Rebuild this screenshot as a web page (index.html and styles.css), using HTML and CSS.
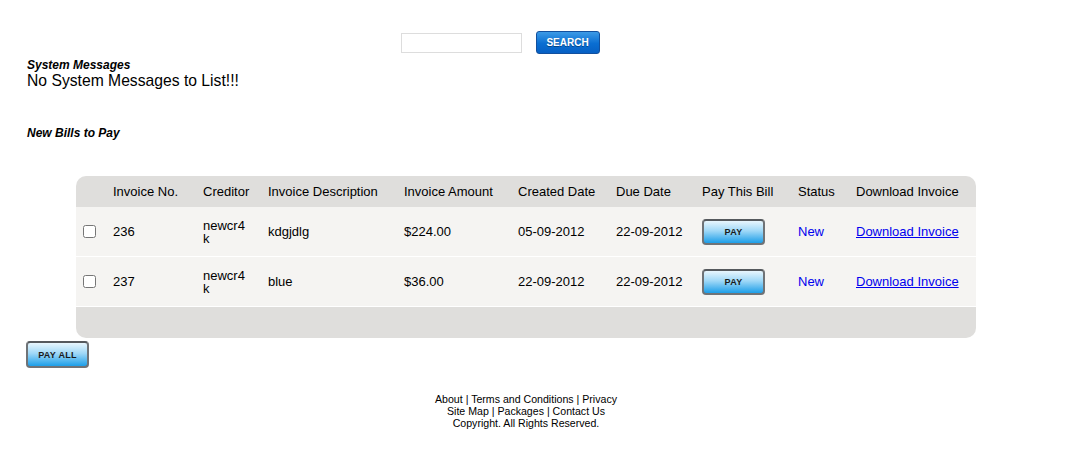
FILE: index.html
```html
<!DOCTYPE html>
<html lang="en">
<head>
    <meta charset="UTF-8">
    <title>Bills</title>
    <link rel="stylesheet" href="styles.css">
</head>
<body>
<div class="page">
    <!-- search bar -->
    <form class="search">
        <input type="text" class="search-box">
        <button type="button" class="btn-search">SEARCH</button>
    </form>

    <div class="messages">
        <h4>System Messages</h4>
        <p>No System Messages to List!!!</p>
    </div>

    <h4 class="bills-title">New Bills to Pay</h4>

    <table class="bills">
        <colgroup>
            <col style="width:30px"><col style="width:90px"><col style="width:65px">
            <col style="width:136px"><col style="width:114px"><col style="width:98px">
            <col style="width:86px"><col style="width:96px"><col style="width:58px">
            <col style="width:127px">
        </colgroup>
        <thead>
            <tr>
                <th></th>
                <th>Invoice No.</th>
                <th>Creditor</th>
                <th>Invoice Description</th>
                <th>Invoice Amount</th>
                <th>Created Date</th>
                <th>Due Date</th>
                <th>Pay This Bill</th>
                <th>Status</th>
                <th>Download Invoice</th>
            </tr>
        </thead>
        <tbody>
            <tr>
                <td><input type="checkbox" class="chk"></td>
                <td>236</td>
                <td class="creditor">newcr4k</td>
                <td>kdgjdlg</td>
                <td>$224.00</td>
                <td>05-09-2012</td>
                <td>22-09-2012</td>
                <td><a class="btn-pay">PAY</a></td>
                <td class="status">New</td>
                <td><a href="#" class="dl">Download Invoice</a></td>
            </tr>
            <tr>
                <td><input type="checkbox" class="chk"></td>
                <td>237</td>
                <td class="creditor">newcr4k</td>
                <td>blue</td>
                <td>$36.00</td>
                <td>22-09-2012</td>
                <td>22-09-2012</td>
                <td><a class="btn-pay">PAY</a></td>
                <td class="status">New</td>
                <td><a href="#" class="dl">Download Invoice</a></td>
            </tr>
        </tbody>
        <tfoot>
            <tr><td colspan="10"></td></tr>
        </tfoot>
    </table>

    <a class="btn-pay btn-payall">PAY ALL</a>

    <div class="footer">
        <p>About | Terms and Conditions | Privacy</p>
        <p>Site Map | Packages | Contact Us</p>
        <p>Copyright. All Rights Reserved.</p>
    </div>
</div>
</body>
</html>
```

FILE: styles.css
```css
html, body {
    margin: 0;
    padding: 0;
    background: #fff;
    font-family: "Liberation Sans", Arial, sans-serif;
    color: #000;
}
.page {
    width: 1052px;
    padding-top: 31px;
}

/* search */
.search {
    display: flex;
    align-items: center;
    justify-content: center;
    gap: 14px;
    margin: 0;
    padding-right: 52px;
}
.search-box {
    width: 117px;
    height: 16px;
    margin: 0;
    padding: 1px;
    border: 1px solid #ddd;
    outline: none;
}
.btn-search {
    width: 64px;
    height: 23px;
    margin: 0;
    padding: 0;
    border: 1px solid #12509e;
    border-radius: 3px;
    background: linear-gradient(#3c9ae6, #0a6ed2 55%, #0660c4);
    color: #fff;
    font-family: "Liberation Sans", Arial, sans-serif;
    font-size: 10px;
    font-weight: bold;
    text-shadow: 0 1px 0 rgba(0,0,0,0.35);
}

/* messages */
.messages {
    margin: 5px 0 0 27px;
}
.messages h4, .bills-title {
    margin: 0;
    font-size: 12px;
    font-style: italic;
    font-weight: bold;
    line-height: 13px;
}
.messages p {
    margin: 0;
    font-size: 15.7px;
    line-height: 18px;
}
.bills-title {
    margin: 37px 0 0 27px;
}

/* bills table */
.bills {
    table-layout: fixed;
    width: 900px;
    margin: 36px 0 0 76px;
    border-collapse: separate;
    border-spacing: 0;
    font-size: 13px;
}
.bills th {
    height: 31px;
    padding: 0 0 0 7px;
    background: #dfdedc;
    font-weight: normal;
    text-align: left;
    white-space: nowrap;
}
.bills thead th:first-child { border-top-left-radius: 10px; }
.bills thead th:last-child { border-top-right-radius: 10px; }
.bills td {
    height: 49px;
    padding: 0 0 0 7px;
    background: #f5f4f2;
    border-bottom: 1px solid #fff;
    vertical-align: middle;
}
.bills td.creditor {
    padding-right: 16px;
    word-break: break-all;
    line-height: 13px;
}
.bills tfoot td {
    height: 31px;
    padding: 0;
    border: none;
    background: #dfdedc;
    border-radius: 0 0 10px 10px;
}
.chk {
    width: 13px;
    height: 13px;
    margin: 3px 0 0 0;
}
.status {
    color: #0000ee;
}
.dl {
    color: #0000ee;
}

/* pay buttons */
.btn-pay {
    display: inline-flex;
    align-items: center;
    justify-content: center;
    box-sizing: border-box;
    width: 63px;
    height: 26px;
    border: 2px solid #6f7377;
    border-top-color: #55595d;
    border-radius: 4px;
    background: linear-gradient(#e8f6fd, #9fd8f7 45%, #1c9ee8);
    color: #1a1a1a;
    font-size: 9px;
    font-weight: bold;
    letter-spacing: 0.3px;
    cursor: pointer;
}
.btn-payall {
    margin: 3px 0 0 26px;
    height: 27px;
}

/* footer */
.footer {
    margin-top: 25px;
    text-align: center;
    font-size: 10.6px;
    line-height: 12px;
}
.footer p {
    margin: 0;
}
```
